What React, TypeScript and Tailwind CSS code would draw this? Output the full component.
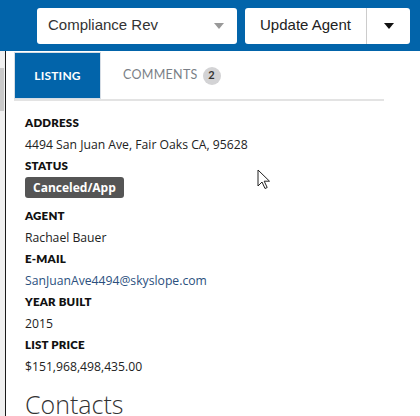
import React from 'react';

const fields = [
  { label: 'ADDRESS', value: '4494 San Juan Ave, Fair Oaks CA, 95628' },
  { label: 'STATUS', badge: 'Canceled/App' },
  { label: 'AGENT', value: 'Rachael Bauer' },
  { label: 'E-MAIL', value: 'SanJuanAve4494@skyslope.com', link: true },
  { label: 'YEAR BUILT', value: '2015' },
  { label: 'LIST PRICE', value: '$151,968,498,435.00' },
];

const Caret = ({ className }: { className?: string }) => (
  <svg width="10" height="6" viewBox="0 0 10 6" className={className}>
    <path d="M0 0h10L5 6z" fill="currentColor" />
  </svg>
);

export default function App() {
  return (
    <div className="relative w-[420px] h-[416px] overflow-hidden bg-white font-['Open_Sans',sans-serif] text-[#222]">
      {/* header */}
      <div className="h-[51px] bg-[#0264aa] flex items-center pl-[37px] gap-2">
        <div className="w-[200px] h-9 bg-white rounded-[3px] flex items-center justify-between pl-[11px] pr-[13px]">
          <span className="text-[15px] text-[#333] font-['Liberation_Sans',sans-serif]">Compliance Rev</span>
          <Caret className="text-[#999]" />
        </div>
        <div className="w-[165px] h-9 bg-white rounded-[3px] flex">
          <div className="w-[122px] flex items-center justify-center border-r border-[#ccc] text-[15px] text-[#222] font-['Liberation_Sans',sans-serif]">
            Update Agent
          </div>
          <div className="flex-1 flex items-center justify-center">
            <Caret className="text-[#111]" />
          </div>
        </div>
      </div>

      <div className="flex h-[365px]">
        {/* left scroll strip */}
        <div className="w-[5px] bg-[#f0f0f0] pt-[17px]">
          <div className="w-[4px] h-[43px] bg-[#c9c9c9]" />
        </div>
        <div className="w-[1px] bg-[#1a1a1a]" />
        <div className="flex-1 pl-[8px]">
          {/* tabs */}
          <div className="w-[370px] flex h-[50px] border-b-2 border-[#e3e3e3] pt-[1px]">
            <div className="w-[87px] bg-[#0264aa] border border-[#d6dde5] flex items-center justify-center text-white text-[12px] font-bold tracking-[0.2px] font-['Lato',sans-serif]">
              LISTING
            </div>
            <div className="flex items-center pl-[22px] gap-[5px] text-[12.5px] text-[#7a7f87] font-['Lato',sans-serif] tracking-[0.3px]">
              COMMENTS
              <span className="w-[18px] h-[18px] rounded-full bg-[#d3d3d5] text-[#333] text-[11px] font-bold flex items-center justify-center">2</span>
            </div>
          </div>

          {/* listing details */}
          <div className="pl-[11px] pt-[12px]">
            {fields.map((f) => (
              <div key={f.label}>
                <div className="h-5 flex items-center text-[11.5px] font-extrabold text-[#111] font-['Lato',sans-serif] tracking-[0.2px]">
                  {f.label}
                </div>
                {f.badge ? (
                  <div className="flex pt-[1px] pb-[8px]">
                    <span className="flex items-center h-[21px] px-[8px] rounded-[3px] bg-[#555] text-white text-[12px] font-bold">
                      {f.badge}
                    </span>
                  </div>
                ) : (
                  <div className={`leading-[23px] text-[12.2px] ${f.link ? 'text-[#2b4f7e]' : 'text-[#222]'}`}>{f.value}</div>
                )}
              </div>
            ))}
            <div className="mt-[10px] text-[25px] font-light text-[#333] leading-[32px]">Contacts</div>
          </div>
        </div>
      </div>

      {/* mouse cursor */}
      <svg className="absolute left-[257px] top-[169px]" width="14" height="21" viewBox="0 0 14 21">
        <path d="M1 1v16l4-4 3 6.5 2.2-1-3-6.3H12.5z" fill="#fff" stroke="#222" strokeWidth="1" strokeLinejoin="round" />
      </svg>
    </div>
  );
}
